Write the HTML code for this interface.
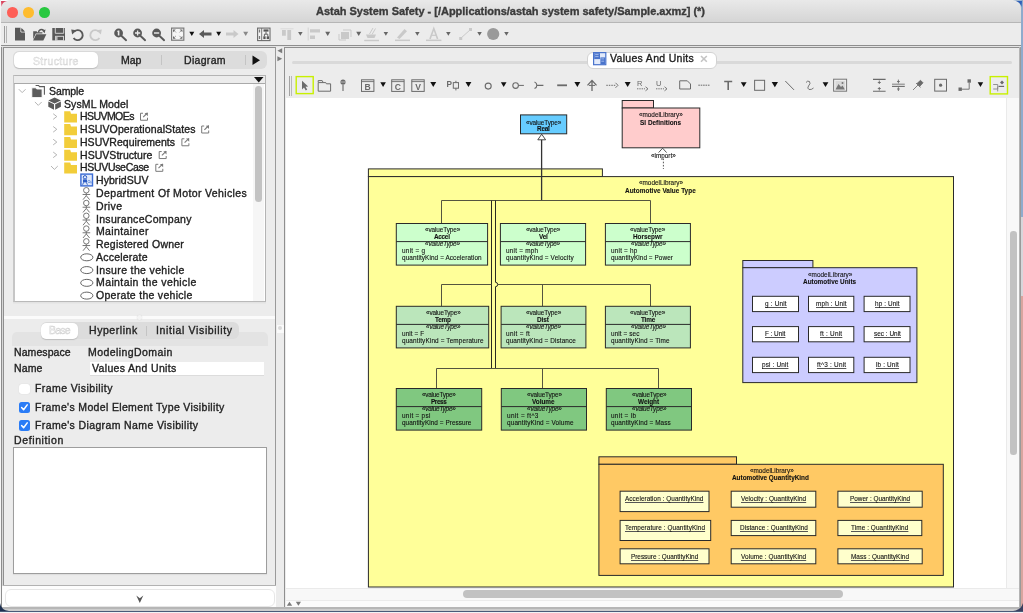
<!DOCTYPE html>
<html><head><meta charset="utf-8"><style>
html,body{margin:0;padding:0;width:1023px;height:613px;overflow:hidden;background:#ececec;}
body{position:relative;font-family:"Liberation Sans", sans-serif;}
.t{position:absolute;white-space:nowrap;-webkit-text-stroke:0.35px currentColor;}
svg{position:absolute;overflow:visible}
body>*{will-change:transform}
</style></head><body>
<div style="position:absolute;left:0px;top:0px;width:1023px;height:613px;background:#ececec"></div><div style="position:absolute;left:1px;top:0px;width:1021px;height:22px;background:linear-gradient(#e9e9e9,#d5d5d5);border-radius:5px 5px 0 0"></div><div style="position:absolute;left:1px;top:22px;width:1021px;height:1px;background:#b6b6b6"></div><div style="position:absolute;left:7.0px;top:6.5px;width:10.6px;height:10.6px;border-radius:50%;background:#fe5f57"></div><div style="position:absolute;left:22.9px;top:6.5px;width:10.6px;height:10.6px;border-radius:50%;background:#febc2e"></div><div style="position:absolute;left:38.7px;top:6.5px;width:10.6px;height:10.6px;border-radius:50%;background:#28c840"></div><div style="position:absolute;left:0px;top:0px;width:1px;height:613px;background:#f4f4f4"></div><div style="position:absolute;left:1px;top:45px;width:1px;height:566px;background:#8c8c8c"></div><div style="position:absolute;left:0px;top:611.5px;width:1023px;height:1.5px;background:#f2f2f4"></div><div style="position:absolute;left:4px;top:26px;width:1px;height:17px;background:#9c9c9c"></div><div style="position:absolute;left:6px;top:26px;width:1px;height:17px;background:#b4b4b4"></div><div style="position:absolute;left:1px;top:45px;width:1021px;height:1px;background:#8e8e8e"></div><div style="position:absolute;left:1px;top:46px;width:1021px;height:1px;background:#e4e4e4"></div><div style="position:absolute;left:3px;top:47px;width:273px;height:539px;background:#ececec;box-sizing:border-box;border-left:1px solid #8f8f8f;border-top:1px solid #8f8f8f;border-right:1px solid #9a9a9a"></div><div style="position:absolute;left:2px;top:47px;width:1px;height:564px;background:#d6d6d6"></div><div style="position:absolute;left:3px;top:585px;width:273px;height:1px;background:#b2b2b2"></div><div style="position:absolute;left:2px;top:586px;width:274px;height:21px;background:#fdfdfd"></div><div style="position:absolute;left:5px;top:589px;width:270px;height:18px;background:#fff;border:1px solid #e6e6e6;border-radius:6px;box-sizing:border-box"></div><svg style="left:135.5px;top:595px" width="8" height="9"><path d="M0.3 0.5 L3.8 8 L7.3 0.5 L3.8 3.2 Z" fill="#555"/></svg><div style="position:absolute;left:276px;top:47px;width:8px;height:564px;background:#ececec"></div><svg style="left:277px;top:48px" width="7" height="15"><path d="M5.2 0.3 L0.4 2.8 L5.2 5.3Z" fill="#7a7a7a"/><path d="M0.4 8.3 L5.2 10.8 L0.4 13.3Z" fill="#7a7a7a"/></svg><div style="position:absolute;left:276.5px;top:324.5px;width:7px;height:8px;background:#fafafa"></div><div style="position:absolute;left:278px;top:326.3px;width:4.4px;height:4.4px;background:#dadada;border-radius:50%"></div><div style="position:absolute;left:13px;top:51px;width:254px;height:18px;background:#dcdcdc;border-radius:6px"></div><div style="position:absolute;left:14px;top:52px;width:84px;height:16px;background:#fff;border-radius:5px;box-shadow:0 0.5px 1px #bdbdbd"></div><div style="position:absolute;left:161px;top:55px;width:1px;height:10px;background:#c4c4c4"></div><div style="position:absolute;left:245px;top:55px;width:1px;height:10px;background:#c4c4c4"></div><svg style="left:252px;top:55px" width="9" height="11"><path d="M0.5 0.5 L8 5.2 L0.5 10Z" fill="#111"/></svg><div style="position:absolute;left:13px;top:75px;width:253px;height:227px;background:#fff;box-sizing:border-box;border:1px solid #b4b4b4;border-left:2px solid #c6c6c6;border-bottom:1.5px solid #b9b9b9;box-shadow:0 1.5px 0 #e2e2e2"></div><div style="position:absolute;left:14px;top:76px;width:251px;height:7px;background:#ececec;border-bottom:1px solid #a9a9a9"></div><svg style="left:254px;top:77px" width="10" height="6"><path d="M0 0 L9.5 0 L4.75 5.5Z" fill="#111"/></svg><div style="position:absolute;left:254.5px;top:86px;width:7px;height:115px;background:#c2c2c2;border-radius:3.5px"></div><div style="position:absolute;left:253px;top:84px;width:11px;height:217px;background:rgba(240,240,240,0.5)"></div><svg style="left:0;top:0" width="1023" height="613"><path d="M18.8 89.2 L22.2 92.60000000000001 L25.6 89.2" fill="none" stroke="#ababab" stroke-width="0.9"/><path d="M35.6 85.50 h3 l0.9 1.1 h4.9 v8.2" fill="none" stroke="#5c5c5c" stroke-width="1.1"/><path d="M31.8 87.80 h3.9 l1 1.2 h5.4 v8.6 h-10.3z" fill="#5c5c5c" stroke="#fff" stroke-width="0.9"/><path d="M34.9 101.97 L38.3 105.37 L41.699999999999996 101.97" fill="none" stroke="#ababab" stroke-width="0.9"/><path d="M54.6 97.47 L60.9 100.47 L54.6 103.47 L48.300000000000004 100.47Z" fill="#5a5a5a"/><path d="M48.300000000000004 101.47 L54.0 104.27 L54.0 109.87 L48.300000000000004 106.87Z" fill="#5a5a5a"/><path d="M60.9 101.47 L55.2 104.27 L55.2 109.87 L60.9 106.87Z" fill="#5a5a5a"/><path d="M53.2 113.74 L56.800000000000004 116.53999999999999 L53.2 119.33999999999999" fill="none" stroke="#ababab" stroke-width="0.9"/><path d="M64.2 111.33999999999999 h6 l0.8 2.5 h6 v8.6 h-12.8z" fill="#f2cd3a"/><path d="M143.0 113.24 h-2.5 v7 h7 v-2.5" fill="none" stroke="#7a7a7a" stroke-width="1"/><path d="M143.2 117.03999999999999 L147.5 112.74" stroke="#7a7a7a" stroke-width="1.1"/><path d="M144.6 112.94 h3.2 v3.2z" fill="#7a7a7a"/><path d="M53.2 126.51 L56.800000000000004 129.31 L53.2 132.11" fill="none" stroke="#ababab" stroke-width="0.9"/><path d="M64.2 124.11 h6 l0.8 2.5 h6 v8.6 h-12.8z" fill="#f2cd3a"/><path d="M204.2 126.01 h-2.5 v7 h7 v-2.5" fill="none" stroke="#7a7a7a" stroke-width="1"/><path d="M204.39999999999998 129.81 L208.7 125.51" stroke="#7a7a7a" stroke-width="1.1"/><path d="M205.79999999999998 125.71000000000001 h3.2 v3.2z" fill="#7a7a7a"/><path d="M53.2 139.27999999999997 L56.800000000000004 142.07999999999998 L53.2 144.87999999999997" fill="none" stroke="#ababab" stroke-width="0.9"/><path d="M64.2 136.88 h6 l0.8 2.5 h6 v8.6 h-12.8z" fill="#f2cd3a"/><path d="M184.4 138.77999999999997 h-2.5 v7 h7 v-2.5" fill="none" stroke="#7a7a7a" stroke-width="1"/><path d="M184.6 142.57999999999998 L188.9 138.27999999999997" stroke="#7a7a7a" stroke-width="1.1"/><path d="M186.0 138.47999999999996 h3.2 v3.2z" fill="#7a7a7a"/><path d="M53.2 152.04999999999998 L56.800000000000004 154.85 L53.2 157.64999999999998" fill="none" stroke="#ababab" stroke-width="0.9"/><path d="M64.2 149.65 h6 l0.8 2.5 h6 v8.6 h-12.8z" fill="#f2cd3a"/><path d="M161.7 151.54999999999998 h-2.5 v7 h7 v-2.5" fill="none" stroke="#7a7a7a" stroke-width="1"/><path d="M161.89999999999998 155.35 L166.2 151.04999999999998" stroke="#7a7a7a" stroke-width="1.1"/><path d="M163.29999999999998 151.24999999999997 h3.2 v3.2z" fill="#7a7a7a"/><path d="M51.0 166.02 L54.4 169.42000000000002 L57.8 166.02" fill="none" stroke="#ababab" stroke-width="0.9"/><path d="M64.2 162.42000000000002 h6 l0.8 2.5 h6 v8.6 h-12.8z" fill="#f2cd3a"/><path d="M158.3 164.32 h-2.5 v7 h7 v-2.5" fill="none" stroke="#7a7a7a" stroke-width="1"/><path d="M158.5 168.12 L162.8 163.82" stroke="#7a7a7a" stroke-width="1.1"/><path d="M159.9 164.01999999999998 h3.2 v3.2z" fill="#7a7a7a"/><rect x="80.9" y="174.09" width="11.6" height="11.8" fill="#dfe9fb" stroke="#3a6bd4" stroke-width="1.4"/><circle cx="85" cy="177.29" r="1.7" fill="none" stroke="#2c5cc4" stroke-width="1"/><path d="M83 179.39 h4 v3 h-4z" fill="#2c5cc4"/><path d="M83.6 182.39 l-1 2.4 M86.4 182.39 l1 2.4" stroke="#2c5cc4" stroke-width="0.9"/><path d="M87.8 181.49 a1.2 1.2 0 1 0 2.4 0 a1.2 1.2 0 1 0 -2.4 0z M90.2 181.49 a1 1 0 1 0 1.6 0" fill="none" stroke="#5a86d8" stroke-width="0.7"/><g stroke="#707070" stroke-width="0.95" fill="none"><circle cx="86.3" cy="190.26" r="2.75"/><path d="M86.3 193.06 v2.6 M82.6 194.46 h7.6 M86.3 195.66 l-3.3 4 M86.3 195.66 l3.3 4"/></g><g stroke="#707070" stroke-width="0.95" fill="none"><circle cx="86.3" cy="203.03" r="2.75"/><path d="M86.3 205.83 v2.6 M82.6 207.23 h7.6 M86.3 208.43 l-3.3 4 M86.3 208.43 l3.3 4"/></g><g stroke="#707070" stroke-width="0.95" fill="none"><circle cx="86.3" cy="215.80" r="2.75"/><path d="M86.3 218.60 v2.6 M82.6 220.00 h7.6 M86.3 221.20 l-3.3 4 M86.3 221.20 l3.3 4"/></g><g stroke="#707070" stroke-width="0.95" fill="none"><circle cx="86.3" cy="228.57" r="2.75"/><path d="M86.3 231.37 v2.6 M82.6 232.77 h7.6 M86.3 233.97 l-3.3 4 M86.3 233.97 l3.3 4"/></g><g stroke="#707070" stroke-width="0.95" fill="none"><circle cx="86.3" cy="241.34" r="2.75"/><path d="M86.3 244.14 v2.6 M82.6 245.54 h7.6 M86.3 246.74 l-3.3 4 M86.3 246.74 l3.3 4"/></g><ellipse cx="86.8" cy="257.31" rx="6.1" ry="3.5" fill="none" stroke="#5e5e5e" stroke-width="0.95"/><ellipse cx="86.8" cy="270.08" rx="6.1" ry="3.5" fill="none" stroke="#5e5e5e" stroke-width="0.95"/><ellipse cx="86.8" cy="282.84999999999997" rx="6.1" ry="3.5" fill="none" stroke="#5e5e5e" stroke-width="0.95"/><ellipse cx="86.8" cy="295.62" rx="6.1" ry="3.5" fill="none" stroke="#5e5e5e" stroke-width="0.95"/></svg><div style="position:absolute;left:253px;top:84px;width:11px;height:217px;background:#f6f6f6"></div><div style="position:absolute;left:254.5px;top:86px;width:6.5px;height:116px;background:#c3c3c3;border-radius:3.5px"></div><div style="position:absolute;left:4px;top:316px;width:271px;height:3px;background:#fbfbfb"></div><div style="position:absolute;left:137px;top:315px;width:5px;height:5px;background:#f4f4f4;border-radius:50%;box-shadow:0 0 1px #c8c8c8"></div><div style="position:absolute;left:11.5px;top:332px;width:256px;height:248px;background:#e3e3e3;border-radius:5px"></div><div style="position:absolute;left:11.5px;top:345.5px;width:256px;height:234px;background:#ececec"></div><div style="position:absolute;left:41px;top:322px;width:198px;height:17.4px;background:#dcdcdc;border-radius:6px"></div><div style="position:absolute;left:41px;top:322.5px;width:37px;height:16.4px;background:#fff;border-radius:5px;box-shadow:0 0.5px 1px #bdbdbd"></div><div style="position:absolute;left:146px;top:326px;width:1px;height:10px;background:#c4c4c4"></div><div style="position:absolute;left:90px;top:362px;width:174px;height:14px;background:#fff;border-bottom:1px solid #dcdcdc;box-sizing:border-box"></div><div style="position:absolute;left:19px;top:384px;width:10.5px;height:10px;background:#fff;border-radius:2.5px;box-shadow:0 0 0.8px #b8b8b8"></div><div style="position:absolute;left:19px;top:401.8px;width:10.5px;height:10.5px;border-radius:2.5px;background:#2a7cf6"></div><svg style="left:19px;top:401.8px" width="11" height="11"><path d="M2.6 5.6 L4.6 7.8 L8.2 2.9" fill="none" stroke="#fff" stroke-width="1.5" stroke-linecap="round" stroke-linejoin="round"/></svg><div style="position:absolute;left:19px;top:420.3px;width:10.5px;height:10.5px;border-radius:2.5px;background:#2a7cf6"></div><svg style="left:19px;top:420.3px" width="11" height="11"><path d="M2.6 5.6 L4.6 7.8 L8.2 2.9" fill="none" stroke="#fff" stroke-width="1.5" stroke-linecap="round" stroke-linejoin="round"/></svg><div style="position:absolute;left:13px;top:447px;width:254px;height:127px;background:#fff;border:1px solid #9d9d9d;box-sizing:border-box;box-shadow:0 1px 1px #dedede"></div><div style="position:absolute;left:284px;top:47px;width:737px;height:564px;background:#ececec;box-sizing:border-box;border-left:1px solid #8f8f8f;border-top:1px solid #8f8f8f"></div><div style="position:absolute;left:1019px;top:47px;width:1px;height:564px;background:#b4b4b4"></div><div style="position:absolute;left:1020px;top:47px;width:1px;height:564px;background:#9a9a9a"></div><div style="position:absolute;left:1021px;top:0px;width:2px;height:217px;background:#8fabcc"></div><div style="position:absolute;left:1021px;top:217px;width:2px;height:79px;background:#d6d6da"></div><div style="position:absolute;left:1021px;top:296px;width:2px;height:315px;background:#d9a59e"></div><div style="position:absolute;left:292px;top:61px;width:720px;height:3px;background:#d9d9d9;border-radius:1.5px"></div><div style="position:absolute;left:587px;top:51.5px;width:130px;height:17px;background:#fff;border:1px solid #d2d2d2;border-radius:6px;box-sizing:border-box"></div><svg style="left:593px;top:51.6px" width="14" height="14"><rect x="0.6" y="0.6" width="12.2" height="12.1" fill="#e2eafa" stroke="#4a74cc" stroke-width="1.2"/><rect x="1.2" y="1.2" width="5.8" height="5.9" fill="#4a74cc"/><rect x="7.4" y="5.4" width="4.8" height="6.7" fill="#4a74cc"/><path d="M2.2 2.6 h3.4 M2.2 4.6 h3.4 M8.3 6.9 h2.8 M8.3 9.2 h2.8" stroke="#a9c0ec" stroke-width="0.9"/></svg><svg style="left:700px;top:55px" width="8" height="8"><path d="M1 1 L6.8 6.8 M6.8 1 L1 6.8" stroke="#c4c4c4" stroke-width="1.6"/></svg><div style="position:absolute;left:289px;top:75.5px;width:1px;height:20px;background:#a3a3a3"></div><div style="position:absolute;left:291px;top:75.5px;width:1px;height:20px;background:#b9b9b9"></div><div style="position:absolute;left:286px;top:98px;width:720px;height:490px;background:#fff"></div><div style="position:absolute;left:1006px;top:98px;width:13px;height:490px;background:#f8f8f8;border-left:1px solid #eaeaea;box-sizing:border-box"></div><div style="position:absolute;left:1009.6px;top:231px;width:6.6px;height:224px;background:#c2c2c2;border-radius:3.3px"></div><div style="position:absolute;left:286px;top:588px;width:733px;height:12px;background:#f8f8f8;border-top:1px solid #eaeaea;box-sizing:border-box"></div><div style="position:absolute;left:462.5px;top:590px;width:380px;height:8px;background:#c2c2c2;border-radius:4px"></div><div style="position:absolute;left:286px;top:600px;width:733px;height:8px;background:#fbfbfb;border-top:1px solid #ebebeb;box-sizing:border-box"></div><svg style="left:286px;top:601px" width="16" height="6"><path d="M0.8 4.8 L3.5 0.8 L6.2 4.8Z" fill="#7a7a7a"/><path d="M9.8 0.8 L15 0.8 L12.4 4.8Z" fill="#7a7a7a"/></svg><svg style="left:0;top:0" width="1023" height="613"><path d="M15 27.8 h5.6 l4.4 4.4 v8.2 h-10z" fill="#595959"/><path d="M20.9 27.9 v4.1 h4.1" fill="none" stroke="#f2f2f2" stroke-width="0.9"/><path d="M21.5 27.9 L25 31.4 H21.5Z" fill="#595959"/><path d="M33.2 31.2 h3.4 l0.8 1 h5 v1.4 h-6.6 l-2.6 5.6z" fill="#595959"/><path d="M33.1 40.4 L36.2 34.2 H46.4 L43.3 40.4Z" fill="#595959"/><path d="M38.5 32.6 A3.1 3.1 0 0 1 43.6 30.2" fill="none" stroke="#595959" stroke-width="1.5"/><path d="M42 30.4 L45.6 29.6 L44.6 33.2Z" fill="#595959"/><rect x="52.3" y="28" width="12.7" height="12.4" fill="#595959"/><path d="M55.3 28 v5.3 h8.4 v-5.3" fill="none" stroke="#dedede" stroke-width="0.9"/><rect x="55.6" y="36.3" width="7.9" height="4.3" fill="#595959" stroke="#dedede" stroke-width="0.9"/><rect x="56.3" y="37" width="1.1" height="3" fill="#dedede"/><path d="M74.2 31.6 A5 5 0 1 1 73.6 38" fill="none" stroke="#595959" stroke-width="1.9"/><path d="M71.2 29.6 L76.6 30.2 L72.2 34.4Z" fill="#595959"/><path d="M98.8 31.6 A5 5 0 1 0 99.4 38" fill="none" stroke="#c9c9c9" stroke-width="1.9"/><path d="M101.8 29.6 L96.4 30.2 L100.8 34.4Z" fill="#c9c9c9"/><circle cx="118.6" cy="33" r="4.4" fill="#595959"/><path d="M121.6 36 L126.1 40.2" stroke="#595959" stroke-width="1.9" stroke-linecap="round"/><path d="M117.8 30.6 h1.6 v5 h-1.6z M116.8 31.4 l1 -0.8 v1.2z" fill="#ececec"/><circle cx="137.6" cy="33" r="4.4" fill="#595959"/><path d="M140.6 36 L145.1 40.2" stroke="#595959" stroke-width="1.9" stroke-linecap="round"/><path d="M135.0 33 h5.2 M137.6 30.4 v5.2" stroke="#ececec" stroke-width="1.3"/><circle cx="156.6" cy="33" r="4.4" fill="#595959"/><path d="M159.6 36 L164.1 40.2" stroke="#595959" stroke-width="1.9" stroke-linecap="round"/><path d="M154.0 33 h5.2" stroke="#ececec" stroke-width="1.4"/><rect x="171.6" y="28.1" width="12.2" height="12.1" fill="#f6f6f6" stroke="#7a7a7a" stroke-width="1.2"/><path d="M173 29.5 h2.8 l-2.8 2.8z M182.4 29.5 h-2.8 l2.8 2.8z M173 38.8 h2.8 l-2.8 -2.8z M182.4 38.8 h-2.8 l2.8 -2.8z" fill="#6a6a6a"/><path d="M174.2 30.7 l1.8 1.8 M181.2 30.7 l-1.8 1.8 M174.2 37.6 l1.8 -1.8 M181.2 37.6 l-1.8 -1.8" stroke="#8a8a8a" stroke-width="0.8"/><path d="M189.3 31.674999999999997 L194.3 31.674999999999997 L191.8 35.925Z" fill="#111"/><path d="M199 34 L204 29.9 V32.4 H211.5 V35.6 H204 V38.1Z" fill="#595959"/><path d="M216.2 31.674999999999997 L221.2 31.674999999999997 L218.7 35.925Z" fill="#111"/><path d="M238.5 34 L233.5 29.9 V32.4 H226 V35.6 H233.5 V38.1Z" fill="#c9c9c9"/><path d="M243.2 31.674999999999997 L248.2 31.674999999999997 L245.7 35.925Z" fill="#888"/><rect x="257.6" y="28.1" width="12.4" height="12.5" fill="#f4f4f4" stroke="#6a6a6a" stroke-width="1.1"/><path d="M261.7 28.1 v12.5" stroke="#6a6a6a" stroke-width="0.9"/><path d="M259.5 29.6 v2.8 M259.5 35.9 v3" stroke="#7a7a7a" stroke-width="1.3"/><rect x="263.5" y="29.4" width="5" height="2.2" fill="#555"/><path d="M266 31.6 v2.6 M264.4 34.2 h3.4 M264.4 34.2 v2 M267.8 34.2 v2" stroke="#555" stroke-width="0.9" fill="none"/><rect x="263.3" y="36.3" width="2.3" height="2.8" fill="#555"/><rect x="266.7" y="36.3" width="2.3" height="2.8" fill="#555"/><path d="M280.5 28.3 h13 v1 h-13z" fill="#dadada"/><path d="M282 30 h3.8 v5.8 h-3.8z M287.3 30 h3.8 v10 h-3.8z" fill="#c9c9c9"/><path d="M298.1 31.887499999999996 L302.6 31.887499999999996 L300.35 35.7125Z" fill="#666"/><path d="M308.2 27.5 v13" stroke="#d0d0d0" stroke-width="0.9"/><path d="M310 29.2 h10 v3.3 h-10z M310 35.6 h5 v3.4 h-5z" fill="#c9c9c9"/><path d="M325.2 31.674999999999997 L330.2 31.674999999999997 L327.7 35.925Z" fill="#666"/><path d="M341 32 h8 v7 h-8z" fill="#c9c9c9"/><path d="M343 30 h8 v7" fill="none" stroke="#c9c9c9" stroke-width="1"/><path d="M339 34 v6 h7" fill="none" stroke="#c9c9c9" stroke-width="1"/><path d="M356.2 31.674999999999997 L361.2 31.674999999999997 L358.7 35.925Z" fill="#666"/><path d="M366 34.5 h10 l-1.5 3.5 h-7z" fill="#c9c9c9"/><path d="M369.5 34 L373 28 M372 34.5 L375.5 28.5" stroke="#c9c9c9" stroke-width="1"/><rect x="364.2" y="39.8" width="14.8" height="1.4" fill="#c9c9c9"/><path d="M383.6 31.887499999999996 L388.1 31.887499999999996 L385.85 35.7125Z" fill="#666"/><path d="M397 37.5 L404.5 29 L407 31.3 L399.5 39z" fill="#c9c9c9"/><rect x="395" y="39.6" width="15" height="1.5" fill="#c9c9c9"/><path d="M415.1 31.887499999999996 L419.6 31.887499999999996 L417.35 35.7125Z" fill="#666"/><path d="M430 39 L433.8 28.5 L437.6 39" fill="none" stroke="#c9c9c9" stroke-width="1.6"/><path d="M431.6 35.3 h4.4" stroke="#c9c9c9" stroke-width="1.2"/><rect x="426" y="39.6" width="15.4" height="1.5" fill="#c9c9c9"/><path d="M446.1 31.887499999999996 L450.6 31.887499999999996 L448.35 35.7125Z" fill="#666"/><rect x="459.2" y="37" width="3" height="3" fill="#c9c9c9"/><rect x="469" y="28" width="3" height="3" fill="#c9c9c9"/><path d="M461 38 L470 30" stroke="#c9c9c9" stroke-width="1"/><path d="M477.3 31.887499999999996 L481.8 31.887499999999996 L479.55 35.7125Z" fill="#666"/><circle cx="493.2" cy="34" r="6.1" fill="#9a9a9a"/><path d="M504.2 31.887499999999996 L508.7 31.887499999999996 L506.45 35.7125Z" fill="#666"/></svg><svg style="left:0;top:0" width="1023" height="613"><rect x="296.2" y="76.6" width="17" height="17" fill="none" stroke="#c8f000" stroke-width="1.4"/><path d="M302 80.8 L302 89.5 L304 87.4 L305.8 90.4 L307.2 89.6 L305.5 86.8 L308.2 86.6Z" fill="#6a6a6a"/><path d="M318.2 82.2 v-1.6 h4 l0.8 1.6 M318.2 82.6 h7.6 l0.6 1.2 h4.2 v7.4 h-12.4z" fill="none" stroke="#6a6a6a" stroke-width="1"/><circle cx="343" cy="82" r="2.6" fill="#6a6a6a"/><path d="M340.6 82 h4.8" stroke="#ececec" stroke-width="0.6"/><path d="M343 84.5 v6.5" stroke="#6a6a6a" stroke-width="1.1"/><rect x="361.5" y="79.8" width="12.4" height="11.6" fill="none" stroke="#6a6a6a" stroke-width="1"/><path d="M361.5 81.6 h12.4" stroke="#6a6a6a" stroke-width="0.9"/><text x="367.7" y="90.0" font-family="Liberation Sans" font-weight="bold" font-size="8.6" fill="#6a6a6a" text-anchor="middle">B</text><path d="M380.3 82.22000000000001 L385.9 82.22000000000001 L383.1 86.97999999999998Z" fill="#111"/><rect x="391.7" y="79.8" width="12.4" height="11.6" fill="none" stroke="#6a6a6a" stroke-width="1"/><path d="M391.7 81.6 h12.4" stroke="#6a6a6a" stroke-width="0.9"/><text x="397.9" y="90.0" font-family="Liberation Sans" font-weight="bold" font-size="8.6" fill="#6a6a6a" text-anchor="middle">C</text><rect x="411.8" y="79.8" width="12.4" height="11.6" fill="none" stroke="#6a6a6a" stroke-width="1"/><path d="M411.8 81.6 h12.4" stroke="#6a6a6a" stroke-width="0.9"/><text x="418.0" y="90.0" font-family="Liberation Sans" font-weight="bold" font-size="8.6" fill="#6a6a6a" text-anchor="middle">V</text><path d="M430.3 82.0925 L436.2 82.0925 L433.25 87.10749999999999Z" fill="#111"/><text x="446.6" y="86.9" font-family="Liberation Sans" font-weight="bold" font-size="8.2" fill="#6a6a6a">P</text><rect x="453.3" y="82.6" width="5.2" height="5.6" fill="none" stroke="#6a6a6a" stroke-width="1"/><path d="M455.9 80.8 v1.8 M455.9 88.2 v2.2" stroke="#6a6a6a" stroke-width="1"/><path d="M465.5 82.0925 L471.4 82.0925 L468.45 87.10749999999999Z" fill="#111"/><circle cx="488.2" cy="86.1" r="3" fill="none" stroke="#6a6a6a" stroke-width="1.1"/><path d="M500.9 82.21999999999998 L506.5 82.21999999999998 L503.7 86.98Z" fill="#111"/><circle cx="515.6" cy="85.6" r="2.8" fill="none" stroke="#6a6a6a" stroke-width="1.1"/><path d="M518.4 85.4 h5.5" stroke="#6a6a6a" stroke-width="1"/><path d="M534.5 82 A3.5 3.5 0 0 1 534.5 88.6 M537 85.4 h6.4" fill="none" stroke="#6a6a6a" stroke-width="1.1"/><path d="M557.2 85.3 h9.8" stroke="#6a6a6a" stroke-width="1.8"/><path d="M574.4 82.0925 L580.3 82.0925 L577.3499999999999 87.10749999999999Z" fill="#111"/><path d="M587.5 85.4 L592 80.4 L596.5 85.4 M592 81 v10" fill="none" stroke="#6a6a6a" stroke-width="1.3"/><path d="M589 85.4 h6" stroke="#6a6a6a" stroke-width="1"/><path d="M606.3 85.3 h9.5" stroke="#6a6a6a" stroke-dasharray="1.5 1" stroke-width="1"/><path d="M615.5 82.8 L618 85.3 L615.5 87.8" fill="none" stroke="#6a6a6a" stroke-width="0.9"/><path d="M624.7 82.0925 L630.6 82.0925 L627.6500000000001 87.10749999999999Z" fill="#111"/><text x="637" y="86" font-family="Liberation Sans" font-size="7.5" fill="#6a6a6a">R</text><path d="M637 88.8 h8" stroke="#6a6a6a" stroke-dasharray="1.4 0.9" stroke-width="0.9"/><path d="M645.5 86.8 L648 88.8 L645.5 90.8" fill="none" stroke="#6a6a6a" stroke-width="0.9"/><text x="656" y="86" font-family="Liberation Sans" font-size="7.5" fill="#6a6a6a">U</text><path d="M656 88.8 h8" stroke="#6a6a6a" stroke-dasharray="1.4 0.9" stroke-width="0.9"/><path d="M664.5 86.8 L667 88.8 L664.5 90.8" fill="none" stroke="#6a6a6a" stroke-width="0.9"/><path d="M679.7 80.8 h7.6 l3.2 3.2 v5 h-10.8z" fill="none" stroke="#6a6a6a" stroke-width="1"/><path d="M698.3 85.2 h11.7" stroke="#6a6a6a" stroke-dasharray="1.6 0.8" stroke-width="1"/><path d="M724.2 81.5 h8 M728.2 81.5 v8.6" stroke="#6a6a6a" stroke-width="1.6"/><path d="M740.8 82.13499999999996 L746.6 82.13499999999996 L743.7 87.06500000000003Z" fill="#111"/><rect x="754.6" y="80.3" width="10" height="10" fill="none" stroke="#6a6a6a" stroke-width="1"/><path d="M771.7 81.92250000000001 L778 81.92250000000001 L774.85 87.27749999999997Z" fill="#111"/><path d="M785.3 81 L794 89.9" stroke="#6a6a6a" stroke-width="1"/><path d="M806 82.5 Q807.5 80.3 809.5 81.5 Q811 83.5 808.5 86 Q806.8 88.3 809 89.5 Q811.5 90 813.5 88" fill="none" stroke="#6a6a6a" stroke-width="0.9"/><path d="M822.6 82.13500000000002 L828.4 82.13500000000002 L825.5 87.06499999999997Z" fill="#111"/><rect x="833.6" y="79.2" width="13" height="12" fill="#ececec" stroke="#777" stroke-width="1"/><rect x="835.5" y="81" width="9.4" height="8.4" fill="#d8d8d8"/><path d="M835.5 89.4 L838.5 84 L841 87 L842.5 85.5 L844.9 89.4Z" fill="#777"/><circle cx="842.5" cy="83" r="1" fill="#777"/><path d="M873 79.4 h12.6 M873 91.3 h12.6" stroke="#6a6a6a" stroke-width="1.1"/><path d="M879.3 80.5 v3.5 M877.8 82.5 h3 M879.3 87 v3.5 M877.8 88.5 h3" stroke="#6a6a6a" stroke-width="0.9"/><path d="M892 84.2 h12.8" stroke="#888" stroke-width="1.1"/><path d="M892 86.4 h12.8" stroke="#6a6a6a" stroke-width="1.1"/><path d="M898.4 79.6 v3.8 M897 81.5 h2.8 M898.4 87.2 v3.8 M897 89 h2.8" stroke="#6a6a6a" stroke-width="0.9"/><path d="M913 90 L918 85" stroke="#6a6a6a" stroke-width="0.8"/><path d="M917 83.5 L920.5 80.3 L923 82.8 L919.8 86.3Z M916 83 l4.5 4.5" fill="#6a6a6a" stroke="#6a6a6a" stroke-width="0.8"/><rect x="934.7" y="79.3" width="11.8" height="11.8" fill="none" stroke="#6a6a6a" stroke-width="1"/><circle cx="940.6" cy="85.2" r="1.6" fill="#6a6a6a"/><rect x="958.5" y="87.5" width="3.4" height="3.4" fill="#6a6a6a"/><rect x="967.5" y="79.3" width="3.4" height="3.4" fill="#6a6a6a"/><path d="M961.9 89.2 h7.3 v-6.5" fill="none" stroke="#6a6a6a" stroke-width="0.9"/><path d="M977.7 82.26249999999999 L983.2 82.26249999999999 L980.45 86.9375Z" fill="#111"/><rect x="990.2" y="76.6" width="17.3" height="17.3" fill="none" stroke="#c8f000" stroke-width="1.4"/><path d="M993.2 84.5 h4.5 v4.5 h-4.5 M997.7 86.8 v4.6" fill="none" stroke="#888" stroke-width="0.9"/><path d="M998.5 86.4 h5.6" stroke="#6a6a6a" stroke-width="1.2"/><path d="M1002 80.5 L1004 82.5 L1002 84.5 L1000 82.5Z" fill="#6a6a6a"/></svg><svg style="left:0;top:0" width="1023" height="613"><rect x="520.5" y="114.9" width="46.20" height="18.90" fill="#66ccff" stroke="#2a2a2a" stroke-width="1"/><rect x="622.2" y="100.5" width="31.30" height="7.50" fill="#ffcccc" stroke="#2a2a2a" stroke-width="1"/><rect x="622.2" y="108" width="77.60" height="39.80" fill="#ffcccc" stroke="#2a2a2a" stroke-width="1"/><path d="M663.4 158.5 L663.4 169" fill="none" stroke="#555" stroke-width="1" stroke-dasharray="1.6 1.6"/><path d="M658.6 152.6 L662.6 148.2 L666.6 152.6" fill="none" stroke="#444" stroke-width="0.9"/><rect x="368.4" y="168.9" width="234.00" height="7.70" fill="#ffff99" stroke="#2a2a2a" stroke-width="1"/><rect x="368.4" y="176.6" width="585.10" height="410.40" fill="#ffff99" stroke="#2a2a2a" stroke-width="1"/><path d="M541.6 139.6 L541.6 200.5" fill="none" stroke="#333" stroke-width="1.3"/><path d="M541.7 134.2 L545.6 139.8 L537.8 139.8Z" fill="#fff" stroke="#333" stroke-width="0.9"/><path d="M441.5 200.5 L650.5 200.5" fill="none" stroke="#55553f" stroke-width="1"/><path d="M441.5 200.5 L441.5 223.5" fill="none" stroke="#55553f" stroke-width="1"/><path d="M650.5 200.5 L650.5 223.5" fill="none" stroke="#55553f" stroke-width="1"/><path d="M491.5 200.5 L491.5 368.5" fill="none" stroke="#2a2a22" stroke-width="1"/><path d="M495.5 200.5 V282.3 A2.2 2.2 0 0 1 495.5 286.7 V368.5" fill="none" stroke="#2a2a22" stroke-width="1"/><path d="M441.5 284.5 L491.5 284.5" fill="none" stroke="#55553f" stroke-width="1"/><path d="M497.7 284.5 L650.5 284.5" fill="none" stroke="#55553f" stroke-width="1"/><path d="M441.5 284.5 L441.5 306.3" fill="none" stroke="#55553f" stroke-width="1"/><path d="M542.5 284.5 L542.5 306.3" fill="none" stroke="#55553f" stroke-width="1"/><path d="M650.5 284.5 L650.5 306.3" fill="none" stroke="#55553f" stroke-width="1"/><path d="M436.5 368.5 L658.5 368.5" fill="none" stroke="#55553f" stroke-width="1"/><path d="M436.5 368.5 L436.5 388.5" fill="none" stroke="#55553f" stroke-width="1"/><path d="M542.5 368.5 L542.5 388.5" fill="none" stroke="#55553f" stroke-width="1"/><path d="M658.5 368.5 L658.5 388.5" fill="none" stroke="#55553f" stroke-width="1"/><rect x="396.3" y="223.5" width="91.30" height="41.60" fill="#ccffcc" stroke="#2a2a2a" stroke-width="1"/><path d="M396.3 241.6 L487.6 241.6" fill="none" stroke="#2a2a2a" stroke-width="1"/><rect x="500.4" y="223.5" width="85.20" height="41.60" fill="#ccffcc" stroke="#2a2a2a" stroke-width="1"/><path d="M500.4 241.6 L585.6 241.6" fill="none" stroke="#2a2a2a" stroke-width="1"/><rect x="605.4" y="223.5" width="85.00" height="41.60" fill="#ccffcc" stroke="#2a2a2a" stroke-width="1"/><path d="M605.4 241.6 L690.4 241.6" fill="none" stroke="#2a2a2a" stroke-width="1"/><rect x="396.3" y="306.3" width="92.40" height="41.60" fill="#bbe6bb" stroke="#2a2a2a" stroke-width="1"/><path d="M396.3 324.40000000000003 L488.7 324.40000000000003" fill="none" stroke="#2a2a2a" stroke-width="1"/><rect x="501.1" y="306.3" width="84.80" height="41.60" fill="#bbe6bb" stroke="#2a2a2a" stroke-width="1"/><path d="M501.1 324.40000000000003 L585.9 324.40000000000003" fill="none" stroke="#2a2a2a" stroke-width="1"/><rect x="605.4" y="306.3" width="85.00" height="41.60" fill="#bbe6bb" stroke="#2a2a2a" stroke-width="1"/><path d="M605.4 324.40000000000003 L690.4 324.40000000000003" fill="none" stroke="#2a2a2a" stroke-width="1"/><rect x="396.3" y="388.5" width="85.40" height="41.60" fill="#80c880" stroke="#2a2a2a" stroke-width="1"/><path d="M396.3 406.6 L481.7 406.6" fill="none" stroke="#2a2a2a" stroke-width="1"/><rect x="501.3" y="388.5" width="85.20" height="41.60" fill="#80c880" stroke="#2a2a2a" stroke-width="1"/><path d="M501.3 406.6 L586.5 406.6" fill="none" stroke="#2a2a2a" stroke-width="1"/><rect x="606.3" y="388.5" width="85.20" height="41.60" fill="#80c880" stroke="#2a2a2a" stroke-width="1"/><path d="M606.3 406.6 L691.5 406.6" fill="none" stroke="#2a2a2a" stroke-width="1"/><rect x="742.8" y="260.5" width="70.10" height="7.20" fill="#ccccff" stroke="#2a2a2a" stroke-width="1"/><rect x="742.8" y="267.7" width="174.10" height="114.90" fill="#ccccff" stroke="#2a2a2a" stroke-width="1"/><rect x="752.5" y="296.3" width="46.00" height="15.30" fill="#ffffff" stroke="#2a2a2a" stroke-width="1"/><rect x="808.5" y="296.3" width="45.30" height="15.30" fill="#ffffff" stroke="#2a2a2a" stroke-width="1"/><rect x="864.1" y="296.3" width="45.90" height="15.30" fill="#ffffff" stroke="#2a2a2a" stroke-width="1"/><rect x="752.5" y="326.6" width="46.00" height="15.20" fill="#ffffff" stroke="#2a2a2a" stroke-width="1"/><rect x="808.5" y="326.6" width="45.30" height="15.20" fill="#ffffff" stroke="#2a2a2a" stroke-width="1"/><rect x="864.1" y="326.6" width="45.90" height="15.20" fill="#ffffff" stroke="#2a2a2a" stroke-width="1"/><rect x="752.5" y="357.3" width="46.00" height="15.30" fill="#ffffff" stroke="#2a2a2a" stroke-width="1"/><rect x="808.5" y="357.3" width="45.30" height="15.30" fill="#ffffff" stroke="#2a2a2a" stroke-width="1"/><rect x="864.1" y="357.3" width="45.90" height="15.30" fill="#ffffff" stroke="#2a2a2a" stroke-width="1"/><rect x="598.9" y="456.8" width="137.60" height="7.50" fill="#ffc964" stroke="#2a2a2a" stroke-width="1"/><rect x="598.9" y="464.3" width="344.40" height="111.10" fill="#ffc964" stroke="#2a2a2a" stroke-width="1"/><rect x="620.1" y="491.2" width="88.90" height="20.40" fill="#ffffcc" stroke="#2a2a2a" stroke-width="1"/><rect x="731.2" y="491.2" width="84.60" height="16.00" fill="#ffffcc" stroke="#2a2a2a" stroke-width="1"/><rect x="837.9" y="491.2" width="84.30" height="16.00" fill="#ffffcc" stroke="#2a2a2a" stroke-width="1"/><rect x="620.1" y="520.4" width="90.60" height="20.10" fill="#ffffcc" stroke="#2a2a2a" stroke-width="1"/><rect x="731.2" y="520.4" width="84.60" height="15.20" fill="#ffffcc" stroke="#2a2a2a" stroke-width="1"/><rect x="837.9" y="520.4" width="83.90" height="15.20" fill="#ffffcc" stroke="#2a2a2a" stroke-width="1"/><rect x="620.1" y="548.8" width="88.90" height="15.00" fill="#ffffcc" stroke="#2a2a2a" stroke-width="1"/><rect x="731.2" y="548.8" width="84.60" height="15.00" fill="#ffffcc" stroke="#2a2a2a" stroke-width="1"/><rect x="837.9" y="548.8" width="84.30" height="15.00" fill="#ffffcc" stroke="#2a2a2a" stroke-width="1"/></svg><div style="position:absolute;left:1px;top:607px;width:1021px;height:1.5px;background:#b6b6b6"></div><div style="position:absolute;left:1px;top:608.5px;width:1021px;height:2px;background:#cdcdcd"></div><div style="position:absolute;left:0px;top:610.5px;width:1023px;height:1px;background:#4a5a78"></div><div style="position:absolute;left:0px;top:611.5px;width:1023px;height:1.5px;background:#f2f2f4"></div><svg style="left:0;top:0" width="1023" height="613"><path d="M0 0 H9 Q1 1 1 9 V0Z" fill="#fff"/><path d="M1 1 H7 Q2 2 1.5 7Z" fill="#d8455e"/><path d="M1023 0 H1013 Q1021 1 1021 9 V0Z" fill="#9fb6d0"/><path d="M1022 1 H1016 Q1020.5 2.5 1021.5 7Z" fill="#2f5fb8"/><path d="M0 613 V603 Q1 610 9 611 H0Z" fill="#1d2f4f"/><path d="M1023 613 V603 Q1021 610 1013 611 H1023Z" fill="#3a3f5f"/></svg>
<div class="t" style="left:316.00px;top:3.98px;font-size:11px;line-height:14.3px;font-weight:bold;color:#3b3b3b;letter-spacing:-0.014px;">Astah System Safety - [/Applications/astah system safety/Sample.axmz] (*)</div>
<div class="t" style="left:33.40px;top:54.51px;font-size:10.5px;line-height:13.65px;font-weight:normal;color:#fcfcfc;letter-spacing:0.350px;-webkit-text-stroke:0.5px #d4d4d4">Structure</div>
<div class="t" style="left:120.50px;top:53.81px;font-size:10.5px;line-height:13.65px;font-weight:normal;color:#222;letter-spacing:-0.013px;">Map</div>
<div class="t" style="left:183.70px;top:53.81px;font-size:10.5px;line-height:13.65px;font-weight:normal;color:#222;letter-spacing:0.320px;">Diagram</div>
<div class="t" style="left:48.60px;top:84.81px;font-size:10.5px;line-height:13.65px;font-weight:normal;color:#1e1e1e;letter-spacing:-0.080px;">Sample</div>
<div class="t" style="left:63.80px;top:97.58px;font-size:10.5px;line-height:13.65px;font-weight:normal;color:#1e1e1e;letter-spacing:0.100px;">SysML Model</div>
<div class="t" style="left:80.20px;top:110.35px;font-size:10.5px;line-height:13.65px;font-weight:normal;color:#1e1e1e;letter-spacing:-0.563px;">HSUVMOEs</div>
<div class="t" style="left:80.20px;top:123.12px;font-size:10.5px;line-height:13.65px;font-weight:normal;color:#1e1e1e;letter-spacing:0.109px;">HSUVOperationalStates</div>
<div class="t" style="left:80.20px;top:135.89px;font-size:10.5px;line-height:13.65px;font-weight:normal;color:#1e1e1e;letter-spacing:0.031px;">HSUVRequirements</div>
<div class="t" style="left:80.20px;top:148.66px;font-size:10.5px;line-height:13.65px;font-weight:normal;color:#1e1e1e;letter-spacing:0.044px;">HSUVStructure</div>
<div class="t" style="left:80.20px;top:161.43px;font-size:10.5px;line-height:13.65px;font-weight:normal;color:#1e1e1e;letter-spacing:-0.316px;">HSUVUseCase</div>
<div class="t" style="left:96.40px;top:174.20px;font-size:10.5px;line-height:13.65px;font-weight:normal;color:#1e1e1e;letter-spacing:0.059px;">HybridSUV</div>
<div class="t" style="left:96.40px;top:186.97px;font-size:10.5px;line-height:13.65px;font-weight:normal;color:#1e1e1e;letter-spacing:0.376px;">Department Of Motor Vehicles</div>
<div class="t" style="left:96.40px;top:199.74px;font-size:10.5px;line-height:13.65px;font-weight:normal;color:#1e1e1e;letter-spacing:0.375px;">Drive</div>
<div class="t" style="left:96.40px;top:212.51px;font-size:10.5px;line-height:13.65px;font-weight:normal;color:#1e1e1e;letter-spacing:0.297px;">InsuranceCompany</div>
<div class="t" style="left:96.40px;top:225.28px;font-size:10.5px;line-height:13.65px;font-weight:normal;color:#1e1e1e;letter-spacing:0.375px;">Maintainer</div>
<div class="t" style="left:96.40px;top:238.05px;font-size:10.5px;line-height:13.65px;font-weight:normal;color:#1e1e1e;letter-spacing:0.212px;">Registered Owner</div>
<div class="t" style="left:96.40px;top:250.82px;font-size:10.5px;line-height:13.65px;font-weight:normal;color:#1e1e1e;letter-spacing:0.221px;">Accelerate</div>
<div class="t" style="left:96.40px;top:263.59px;font-size:10.5px;line-height:13.65px;font-weight:normal;color:#1e1e1e;letter-spacing:0.359px;">Insure the vehicle</div>
<div class="t" style="left:96.40px;top:276.36px;font-size:10.5px;line-height:13.65px;font-weight:normal;color:#1e1e1e;letter-spacing:0.395px;">Maintain the vehicle</div>
<div class="t" style="left:96.40px;top:289.13px;font-size:10.5px;line-height:13.65px;font-weight:normal;color:#1e1e1e;letter-spacing:0.291px;">Operate the vehicle</div>
<div class="t" style="left:48.80px;top:324.41px;font-size:10.5px;line-height:13.65px;font-weight:normal;color:#fcfcfc;letter-spacing:-0.811px;-webkit-text-stroke:0.5px #d0d0d0">Base</div>
<div class="t" style="left:89.30px;top:323.91px;font-size:10.5px;line-height:13.65px;font-weight:normal;color:#222;letter-spacing:0.555px;">Hyperlink</div>
<div class="t" style="left:155.90px;top:323.91px;font-size:10.5px;line-height:13.65px;font-weight:normal;color:#222;letter-spacing:0.643px;">Initial Visibility</div>
<div class="t" style="left:13.60px;top:345.71px;font-size:10.5px;line-height:13.65px;font-weight:normal;color:#222;letter-spacing:0.084px;">Namespace</div>
<div class="t" style="left:87.90px;top:345.71px;font-size:10.5px;line-height:13.65px;font-weight:normal;color:#222;letter-spacing:0.431px;">ModelingDomain</div>
<div class="t" style="left:13.60px;top:362.01px;font-size:10.5px;line-height:13.65px;font-weight:normal;color:#222;letter-spacing:0.130px;">Name</div>
<div class="t" style="left:91.50px;top:362.01px;font-size:10.5px;line-height:13.65px;font-weight:normal;color:#222;letter-spacing:0.336px;">Values And Units</div>
<div class="t" style="left:34.60px;top:382.11px;font-size:10.5px;line-height:13.65px;font-weight:normal;color:#222;letter-spacing:0.427px;">Frame Visibility</div>
<div class="t" style="left:34.60px;top:400.51px;font-size:10.5px;line-height:13.65px;font-weight:normal;color:#222;letter-spacing:0.348px;">Frame's Model Element Type Visibility</div>
<div class="t" style="left:34.60px;top:419.01px;font-size:10.5px;line-height:13.65px;font-weight:normal;color:#222;letter-spacing:0.375px;">Frame's Diagram Name Visibility</div>
<div class="t" style="left:13.60px;top:434.31px;font-size:10.5px;line-height:13.65px;font-weight:normal;color:#222;letter-spacing:0.614px;">Definition</div>
<div class="t" style="left:610.00px;top:51.61px;font-size:10.5px;line-height:13.65px;font-weight:normal;color:#1e1e1e;letter-spacing:0.309px;">Values And Units</div>
<div class="t" style="left:525.90px;top:118.60px;font-size:6.4px;line-height:8.32px;font-weight:normal;color:#111;letter-spacing:-0.094px;-webkit-text-stroke:0.1px currentColor;">«valueType»</div>
<div class="t" style="left:537.00px;top:124.90px;font-size:6.4px;line-height:8.32px;font-weight:bold;color:#111;letter-spacing:-0.200px;-webkit-text-stroke:0.1px currentColor;">Real</div>
<div class="t" style="left:639.10px;top:111.10px;font-size:6.4px;line-height:8.32px;font-weight:normal;color:#111;letter-spacing:-0.027px;-webkit-text-stroke:0.1px currentColor;">«modelLibrary»</div>
<div class="t" style="left:639.80px;top:118.60px;font-size:6.4px;line-height:8.32px;font-weight:bold;color:#111;letter-spacing:0.021px;-webkit-text-stroke:0.1px currentColor;">SI Definitions</div>
<div class="t" style="left:638.90px;top:179.40px;font-size:6.4px;line-height:8.32px;font-weight:normal;color:#111;letter-spacing:-0.004px;-webkit-text-stroke:0.1px currentColor;">«modelLibrary»</div>
<div class="t" style="left:625.20px;top:186.60px;font-size:6.4px;line-height:8.32px;font-weight:bold;color:#111;letter-spacing:0.043px;-webkit-text-stroke:0.1px currentColor;">Automotive Value Type</div>
<div class="t" style="left:424.60px;top:225.70px;font-size:6.4px;line-height:8.32px;font-weight:normal;color:#111;letter-spacing:-0.104px;-webkit-text-stroke:0.1px currentColor;">«valueType»</div>
<div class="t" style="left:434.10px;top:232.70px;font-size:6.4px;line-height:8.32px;font-weight:bold;color:#111;letter-spacing:-0.288px;-webkit-text-stroke:0.1px currentColor;">Accel</div>
<div class="t" style="left:424.90px;top:240.40px;font-size:6.4px;line-height:8.32px;font-weight:normal;color:#111;letter-spacing:-0.104px;-webkit-text-stroke:0.1px currentColor;font-style:italic;">«valueType»</div>
<div class="t" style="left:402.00px;top:246.70px;font-size:6.4px;line-height:8.32px;font-weight:normal;color:#111;letter-spacing:0.266px;-webkit-text-stroke:0.1px currentColor;">unit = g</div>
<div class="t" style="left:402.00px;top:253.70px;font-size:6.4px;line-height:8.32px;font-weight:normal;color:#111;letter-spacing:0.091px;-webkit-text-stroke:0.1px currentColor;">quantityKind = Acceleration</div>
<div class="t" style="left:525.90px;top:225.70px;font-size:6.4px;line-height:8.32px;font-weight:normal;color:#111;letter-spacing:-0.194px;-webkit-text-stroke:0.1px currentColor;">«valueType»</div>
<div class="t" style="left:538.50px;top:232.70px;font-size:6.4px;line-height:8.32px;font-weight:bold;color:#111;letter-spacing:-0.170px;-webkit-text-stroke:0.1px currentColor;">Vel</div>
<div class="t" style="left:526.20px;top:240.40px;font-size:6.4px;line-height:8.32px;font-weight:normal;color:#111;letter-spacing:-0.194px;-webkit-text-stroke:0.1px currentColor;font-style:italic;">«valueType»</div>
<div class="t" style="left:505.90px;top:246.70px;font-size:6.4px;line-height:8.32px;font-weight:normal;color:#111;letter-spacing:0.231px;-webkit-text-stroke:0.1px currentColor;">unit = mph</div>
<div class="t" style="left:505.90px;top:253.70px;font-size:6.4px;line-height:8.32px;font-weight:normal;color:#111;letter-spacing:0.142px;-webkit-text-stroke:0.1px currentColor;">quantityKind = Velocity</div>
<div class="t" style="left:630.20px;top:225.70px;font-size:6.4px;line-height:8.32px;font-weight:normal;color:#111;letter-spacing:-0.104px;-webkit-text-stroke:0.1px currentColor;">«valueType»</div>
<div class="t" style="left:633.00px;top:232.70px;font-size:6.4px;line-height:8.32px;font-weight:bold;color:#111;letter-spacing:-0.011px;-webkit-text-stroke:0.1px currentColor;">Horsepwr</div>
<div class="t" style="left:630.50px;top:240.40px;font-size:6.4px;line-height:8.32px;font-weight:normal;color:#111;letter-spacing:-0.104px;-webkit-text-stroke:0.1px currentColor;font-style:italic;">«valueType»</div>
<div class="t" style="left:610.90px;top:246.70px;font-size:6.4px;line-height:8.32px;font-weight:normal;color:#111;letter-spacing:0.201px;-webkit-text-stroke:0.1px currentColor;">unit = hp</div>
<div class="t" style="left:610.90px;top:253.70px;font-size:6.4px;line-height:8.32px;font-weight:normal;color:#111;letter-spacing:0.070px;-webkit-text-stroke:0.1px currentColor;">quantityKind = Power</div>
<div class="t" style="left:425.50px;top:308.50px;font-size:6.4px;line-height:8.32px;font-weight:normal;color:#111;letter-spacing:-0.154px;-webkit-text-stroke:0.1px currentColor;">«valueType»</div>
<div class="t" style="left:435.00px;top:315.50px;font-size:6.4px;line-height:8.32px;font-weight:bold;color:#111;letter-spacing:-0.190px;-webkit-text-stroke:0.1px currentColor;">Temp</div>
<div class="t" style="left:425.80px;top:323.20px;font-size:6.4px;line-height:8.32px;font-weight:normal;color:#111;letter-spacing:-0.154px;-webkit-text-stroke:0.1px currentColor;font-style:italic;">«valueType»</div>
<div class="t" style="left:402.00px;top:329.50px;font-size:6.4px;line-height:8.32px;font-weight:normal;color:#111;letter-spacing:0.101px;-webkit-text-stroke:0.1px currentColor;">unit = F</div>
<div class="t" style="left:402.00px;top:336.50px;font-size:6.4px;line-height:8.32px;font-weight:normal;color:#111;letter-spacing:0.131px;-webkit-text-stroke:0.1px currentColor;">quantityKind = Temperature</div>
<div class="t" style="left:525.90px;top:308.50px;font-size:6.4px;line-height:8.32px;font-weight:normal;color:#111;letter-spacing:-0.104px;-webkit-text-stroke:0.1px currentColor;">«valueType»</div>
<div class="t" style="left:537.20px;top:315.50px;font-size:6.4px;line-height:8.32px;font-weight:bold;color:#111;letter-spacing:-0.091px;-webkit-text-stroke:0.1px currentColor;">Dist</div>
<div class="t" style="left:526.20px;top:323.20px;font-size:6.4px;line-height:8.32px;font-weight:normal;color:#111;letter-spacing:-0.104px;-webkit-text-stroke:0.1px currentColor;font-style:italic;">«valueType»</div>
<div class="t" style="left:505.90px;top:329.50px;font-size:6.4px;line-height:8.32px;font-weight:normal;color:#111;letter-spacing:0.345px;-webkit-text-stroke:0.1px currentColor;">unit = ft</div>
<div class="t" style="left:505.90px;top:336.50px;font-size:6.4px;line-height:8.32px;font-weight:normal;color:#111;letter-spacing:0.117px;-webkit-text-stroke:0.1px currentColor;">quantityKind = Distance</div>
<div class="t" style="left:630.20px;top:308.50px;font-size:6.4px;line-height:8.32px;font-weight:normal;color:#111;letter-spacing:-0.104px;-webkit-text-stroke:0.1px currentColor;">«valueType»</div>
<div class="t" style="left:640.60px;top:315.50px;font-size:6.4px;line-height:8.32px;font-weight:bold;color:#111;letter-spacing:-0.200px;-webkit-text-stroke:0.1px currentColor;">Time</div>
<div class="t" style="left:630.50px;top:323.20px;font-size:6.4px;line-height:8.32px;font-weight:normal;color:#111;letter-spacing:-0.104px;-webkit-text-stroke:0.1px currentColor;font-style:italic;">«valueType»</div>
<div class="t" style="left:610.90px;top:329.50px;font-size:6.4px;line-height:8.32px;font-weight:normal;color:#111;letter-spacing:0.096px;-webkit-text-stroke:0.1px currentColor;">unit = sec</div>
<div class="t" style="left:610.90px;top:336.50px;font-size:6.4px;line-height:8.32px;font-weight:normal;color:#111;letter-spacing:0.127px;-webkit-text-stroke:0.1px currentColor;">quantityKind = Time</div>
<div class="t" style="left:422.00px;top:390.70px;font-size:6.4px;line-height:8.32px;font-weight:normal;color:#111;letter-spacing:-0.234px;-webkit-text-stroke:0.1px currentColor;">«valueType»</div>
<div class="t" style="left:431.00px;top:397.70px;font-size:6.4px;line-height:8.32px;font-weight:bold;color:#111;letter-spacing:-0.428px;-webkit-text-stroke:0.1px currentColor;">Press</div>
<div class="t" style="left:422.30px;top:405.40px;font-size:6.4px;line-height:8.32px;font-weight:normal;color:#111;letter-spacing:-0.234px;-webkit-text-stroke:0.1px currentColor;font-style:italic;">«valueType»</div>
<div class="t" style="left:401.50px;top:411.70px;font-size:6.4px;line-height:8.32px;font-weight:normal;color:#111;letter-spacing:0.283px;-webkit-text-stroke:0.1px currentColor;">unit = psi</div>
<div class="t" style="left:401.50px;top:418.70px;font-size:6.4px;line-height:8.32px;font-weight:normal;color:#111;letter-spacing:0.062px;-webkit-text-stroke:0.1px currentColor;">quantityKind = Pressure</div>
<div class="t" style="left:526.50px;top:390.70px;font-size:6.4px;line-height:8.32px;font-weight:normal;color:#111;letter-spacing:-0.124px;-webkit-text-stroke:0.1px currentColor;">«valueType»</div>
<div class="t" style="left:532.40px;top:397.70px;font-size:6.4px;line-height:8.32px;font-weight:bold;color:#111;letter-spacing:-0.001px;-webkit-text-stroke:0.1px currentColor;">Volume</div>
<div class="t" style="left:526.80px;top:405.40px;font-size:6.4px;line-height:8.32px;font-weight:normal;color:#111;letter-spacing:-0.124px;-webkit-text-stroke:0.1px currentColor;font-style:italic;">«valueType»</div>
<div class="t" style="left:506.70px;top:411.70px;font-size:6.4px;line-height:8.32px;font-weight:normal;color:#111;letter-spacing:0.361px;-webkit-text-stroke:0.1px currentColor;">unit = ft^3</div>
<div class="t" style="left:506.70px;top:418.70px;font-size:6.4px;line-height:8.32px;font-weight:normal;color:#111;letter-spacing:0.136px;-webkit-text-stroke:0.1px currentColor;">quantityKind = Volume</div>
<div class="t" style="left:631.70px;top:390.70px;font-size:6.4px;line-height:8.32px;font-weight:normal;color:#111;letter-spacing:-0.164px;-webkit-text-stroke:0.1px currentColor;">«valueType»</div>
<div class="t" style="left:638.00px;top:397.70px;font-size:6.4px;line-height:8.32px;font-weight:bold;color:#111;letter-spacing:-0.016px;-webkit-text-stroke:0.1px currentColor;">Weight</div>
<div class="t" style="left:632.00px;top:405.40px;font-size:6.4px;line-height:8.32px;font-weight:normal;color:#111;letter-spacing:-0.164px;-webkit-text-stroke:0.1px currentColor;font-style:italic;">«valueType»</div>
<div class="t" style="left:611.30px;top:411.70px;font-size:6.4px;line-height:8.32px;font-weight:normal;color:#111;letter-spacing:0.305px;-webkit-text-stroke:0.1px currentColor;">unit = lb</div>
<div class="t" style="left:611.30px;top:418.70px;font-size:6.4px;line-height:8.32px;font-weight:normal;color:#111;letter-spacing:0.115px;-webkit-text-stroke:0.1px currentColor;">quantityKind = Mass</div>
<div class="t" style="left:808.00px;top:270.70px;font-size:6.4px;line-height:8.32px;font-weight:normal;color:#111;letter-spacing:0.027px;-webkit-text-stroke:0.1px currentColor;">«modelLibrary»</div>
<div class="t" style="left:802.80px;top:277.90px;font-size:6.4px;line-height:8.32px;font-weight:bold;color:#111;letter-spacing:0.013px;-webkit-text-stroke:0.1px currentColor;">Automotive Units</div>
<div class="t" style="left:764.60px;top:299.90px;font-size:6.4px;line-height:8.32px;font-weight:normal;color:#111;letter-spacing:0.194px;-webkit-text-stroke:0.1px currentColor;text-decoration:underline;text-decoration-thickness:0.5px;text-underline-offset:1px;text-decoration-color:#555;">g : Unit</div>
<div class="t" style="left:816.10px;top:299.90px;font-size:6.4px;line-height:8.32px;font-weight:normal;color:#111;letter-spacing:0.164px;-webkit-text-stroke:0.1px currentColor;text-decoration:underline;text-decoration-thickness:0.5px;text-underline-offset:1px;text-decoration-color:#555;">mph : Unit</div>
<div class="t" style="left:874.90px;top:299.90px;font-size:6.4px;line-height:8.32px;font-weight:normal;color:#111;letter-spacing:0.100px;-webkit-text-stroke:0.1px currentColor;text-decoration:underline;text-decoration-thickness:0.5px;text-underline-offset:1px;text-decoration-color:#555;">hp : Unit</div>
<div class="t" style="left:765.30px;top:330.30px;font-size:6.4px;line-height:8.32px;font-weight:normal;color:#111;letter-spacing:-0.028px;-webkit-text-stroke:0.1px currentColor;text-decoration:underline;text-decoration-thickness:0.5px;text-underline-offset:1px;text-decoration-color:#555;">F : Unit</div>
<div class="t" style="left:820.10px;top:330.30px;font-size:6.4px;line-height:8.32px;font-weight:normal;color:#111;letter-spacing:0.232px;-webkit-text-stroke:0.1px currentColor;text-decoration:underline;text-decoration-thickness:0.5px;text-underline-offset:1px;text-decoration-color:#555;">ft : Unit</div>
<div class="t" style="left:873.80px;top:330.30px;font-size:6.4px;line-height:8.32px;font-weight:normal;color:#111;letter-spacing:0.029px;-webkit-text-stroke:0.1px currentColor;text-decoration:underline;text-decoration-thickness:0.5px;text-underline-offset:1px;text-decoration-color:#555;">sec : Unit</div>
<div class="t" style="left:762.40px;top:360.70px;font-size:6.4px;line-height:8.32px;font-weight:normal;color:#111;letter-spacing:0.160px;-webkit-text-stroke:0.1px currentColor;text-decoration:underline;text-decoration-thickness:0.5px;text-underline-offset:1px;text-decoration-color:#555;">psi : Unit</div>
<div class="t" style="left:816.80px;top:360.70px;font-size:6.4px;line-height:8.32px;font-weight:normal;color:#111;letter-spacing:0.230px;-webkit-text-stroke:0.1px currentColor;text-decoration:underline;text-decoration-thickness:0.5px;text-underline-offset:1px;text-decoration-color:#555;">ft^3 : Unit</div>
<div class="t" style="left:875.80px;top:360.70px;font-size:6.4px;line-height:8.32px;font-weight:normal;color:#111;letter-spacing:0.154px;-webkit-text-stroke:0.1px currentColor;text-decoration:underline;text-decoration-thickness:0.5px;text-underline-offset:1px;text-decoration-color:#555;">lb : Unit</div>
<div class="t" style="left:749.60px;top:467.40px;font-size:6.4px;line-height:8.32px;font-weight:normal;color:#111;letter-spacing:-0.027px;-webkit-text-stroke:0.1px currentColor;">«modelLibrary»</div>
<div class="t" style="left:732.00px;top:474.30px;font-size:6.4px;line-height:8.32px;font-weight:bold;color:#111;letter-spacing:-0.006px;-webkit-text-stroke:0.1px currentColor;">Automotive QuantityKind</div>
<div class="t" style="left:625.40px;top:495.00px;font-size:6.4px;line-height:8.32px;font-weight:normal;color:#111;letter-spacing:0.051px;-webkit-text-stroke:0.1px currentColor;text-decoration:underline;text-decoration-thickness:0.5px;text-underline-offset:1px;text-decoration-color:#555;">Acceleration : QuantityKind</div>
<div class="t" style="left:741.00px;top:495.00px;font-size:6.4px;line-height:8.32px;font-weight:normal;color:#111;letter-spacing:0.053px;-webkit-text-stroke:0.1px currentColor;text-decoration:underline;text-decoration-thickness:0.5px;text-underline-offset:1px;text-decoration-color:#555;">Velocity : QuantityKind</div>
<div class="t" style="left:850.10px;top:495.00px;font-size:6.4px;line-height:8.32px;font-weight:normal;color:#111;letter-spacing:0.004px;-webkit-text-stroke:0.1px currentColor;text-decoration:underline;text-decoration-thickness:0.5px;text-underline-offset:1px;text-decoration-color:#555;">Power : QuantityKind</div>
<div class="t" style="left:625.40px;top:524.20px;font-size:6.4px;line-height:8.32px;font-weight:normal;color:#111;letter-spacing:0.088px;-webkit-text-stroke:0.1px currentColor;text-decoration:underline;text-decoration-thickness:0.5px;text-underline-offset:1px;text-decoration-color:#555;">Temperature : QuantityKind</div>
<div class="t" style="left:739.60px;top:524.20px;font-size:6.4px;line-height:8.32px;font-weight:normal;color:#111;letter-spacing:0.051px;-webkit-text-stroke:0.1px currentColor;text-decoration:underline;text-decoration-thickness:0.5px;text-underline-offset:1px;text-decoration-color:#555;">Distance : QuantityKind</div>
<div class="t" style="left:851.10px;top:524.20px;font-size:6.4px;line-height:8.32px;font-weight:normal;color:#111;letter-spacing:0.079px;-webkit-text-stroke:0.1px currentColor;text-decoration:underline;text-decoration-thickness:0.5px;text-underline-offset:1px;text-decoration-color:#555;">Time : QuantityKind</div>
<div class="t" style="left:631.00px;top:552.60px;font-size:6.4px;line-height:8.32px;font-weight:normal;color:#111;letter-spacing:-0.013px;-webkit-text-stroke:0.1px currentColor;text-decoration:underline;text-decoration-thickness:0.5px;text-underline-offset:1px;text-decoration-color:#555;">Pressure : QuantityKind</div>
<div class="t" style="left:741.00px;top:552.60px;font-size:6.4px;line-height:8.32px;font-weight:normal;color:#111;letter-spacing:0.093px;-webkit-text-stroke:0.1px currentColor;text-decoration:underline;text-decoration-thickness:0.5px;text-underline-offset:1px;text-decoration-color:#555;">Volume : QuantityKind</div>
<div class="t" style="left:851.10px;top:552.60px;font-size:6.4px;line-height:8.32px;font-weight:normal;color:#111;letter-spacing:0.045px;-webkit-text-stroke:0.1px currentColor;text-decoration:underline;text-decoration-thickness:0.5px;text-underline-offset:1px;text-decoration-color:#555;">Mass : QuantityKind</div>
<div class="t" style="left:650.90px;top:151.90px;font-size:6.4px;line-height:8.32px;font-weight:normal;color:#111;letter-spacing:-0.023px;-webkit-text-stroke:0.1px currentColor;">«import»</div>

</body></html>
